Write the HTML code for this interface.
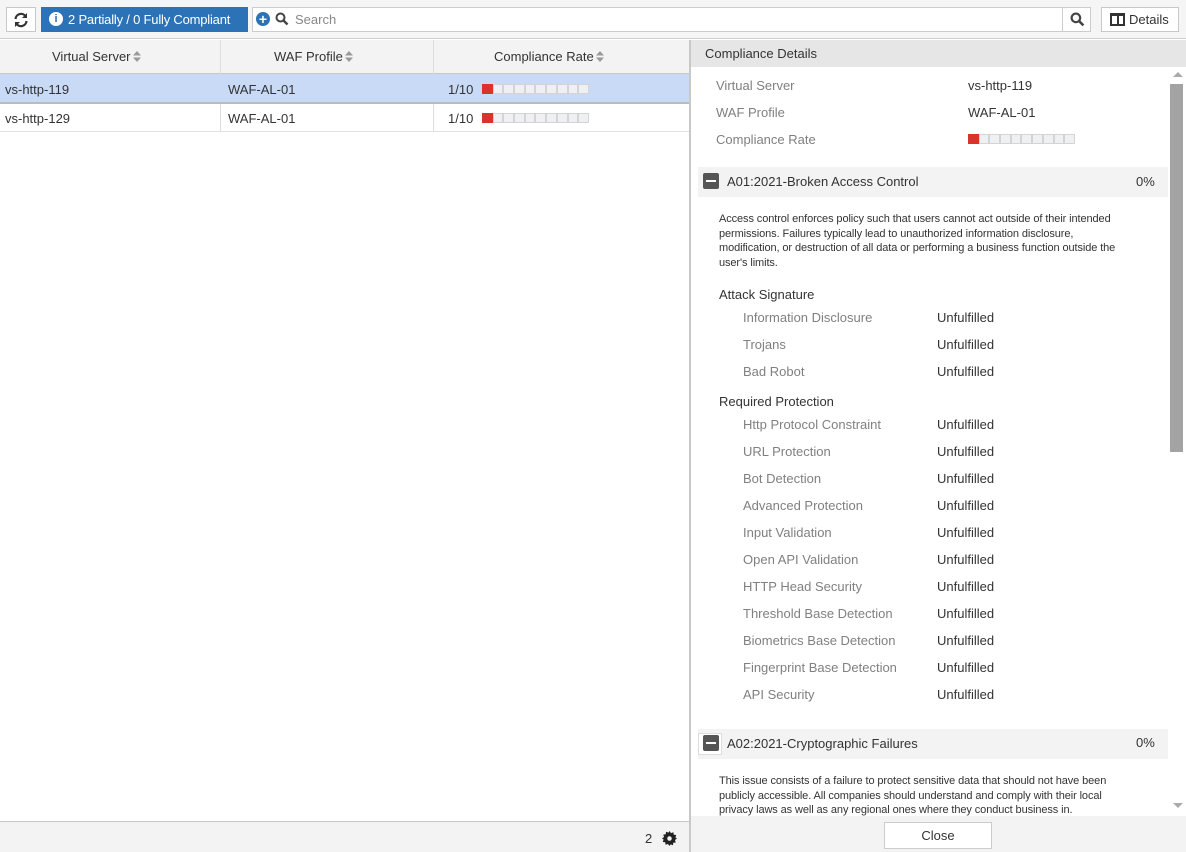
<!DOCTYPE html>
<html><head><meta charset="utf-8"><style>
*{box-sizing:border-box;margin:0;padding:0}
body{width:1186px;height:852px;overflow:hidden;background:#fff;font-family:"Liberation Sans",sans-serif;font-size:13px;color:#333;position:relative}
.a{position:absolute;white-space:nowrap}
.bar{position:absolute;display:flex;height:10px}
.bar i{display:block;width:10.7px;height:10px;border:1px solid #d4d4d4;background:#eef0f3;margin-right:0}
.bar i.r{background:#d9342b;border-color:#d9342b}
.lbl{color:#808080}
.desc{font-size:11px;line-height:14.5px;color:#333;letter-spacing:-0.1px}
.s{display:inline-block;vertical-align:-1px;margin-left:2px}
</style></head><body>
<!-- toolbar -->
<div class="a" style="left:0;top:0;width:1186px;height:39px;background:#f5f5f5;border-bottom:1px solid #cfcfcf"></div>
<div class="a" style="left:6px;top:7px;width:30px;height:25px;border:1px solid #c8c8c8;background:#fff"></div>
<svg class="a" style="left:13px;top:12px" width="16" height="16" viewBox="0 0 16 16"><path d="M2.5 7A5.5 5.5 0 0 1 12.5 4.2" stroke="#333" stroke-width="2.2" fill="none"/><path d="M14 1v5h-5z" fill="#333"/><path d="M13.5 9A5.5 5.5 0 0 1 3.5 11.8" stroke="#333" stroke-width="2.2" fill="none"/><path d="M2 15v-5h5z" fill="#333"/></svg>
<div class="a" style="left:41px;top:7px;width:207px;height:25px;background:#2b73b6"></div>
<div class="a" style="left:49px;top:12px;width:14px;height:14px;border-radius:50%;background:#fff;color:#2b73b6;font-weight:bold;font-size:11px;text-align:center;line-height:14px">i</div>
<div class="a" style="left:68px;top:12px;color:#fff;font-size:13px;letter-spacing:-0.2px">2 Partially / 0 Fully Compliant</div>
<div class="a" style="left:252px;top:7px;width:839px;height:25px;border:1px solid #ccc;background:#fff"></div>
<div class="a" style="left:256px;top:12px;width:14px;height:14px;border-radius:50%;background:#2b73b6;color:#fff;font-weight:bold;font-size:14px;text-align:center;line-height:14px">+</div>
<svg class="a" style="left:275px;top:12px" width="14" height="14" viewBox="0 0 14 14"><circle cx="5.5" cy="5.5" r="4" stroke="#444" stroke-width="2" fill="none"/><path d="M8.5 8.5L12.5 12.5" stroke="#444" stroke-width="2.4"/></svg>
<div class="a" style="left:295px;top:12px;color:#888">Search</div>
<div class="a" style="left:1062px;top:7px;width:1px;height:25px;background:#ccc"></div>
<svg class="a" style="left:1070px;top:12px" width="15" height="15" viewBox="0 0 14 14"><circle cx="5.5" cy="5.5" r="4" stroke="#444" stroke-width="2" fill="none"/><path d="M8.5 8.5L12.5 12.5" stroke="#444" stroke-width="2.4"/></svg>
<div class="a" style="left:1101px;top:7px;width:78px;height:25px;border:1px solid #c8c8c8;background:#fff"></div>
<div class="a" style="left:1110px;top:13px;width:15px;height:13px;border:2px solid #333;border-top-width:3px"></div>
<div class="a" style="left:1117px;top:14px;width:2px;height:11px;background:#333"></div>
<div class="a" style="left:1129px;top:12px;color:#333">Details</div>

<!-- left grid -->
<div class="a" style="left:0;top:40px;width:689px;height:34px;background:#f3f3f3;border-bottom:1px solid #c8c8c8"></div>
<div class="a" style="left:220px;top:40px;width:1px;height:92px;background:#ddd"></div>
<div class="a" style="left:433px;top:40px;width:1px;height:92px;background:#ddd"></div>
<div class="a" style="left:52px;top:49px">Virtual Server<svg class="s" width="8" height="11" viewBox="0 0 8 11"><path d="M0 4.5L4 0 8 4.5zM0 6.5L4 11 8 6.5z" fill="#999"/></svg></div>
<div class="a" style="left:274px;top:49px">WAF Profile<svg class="s" width="8" height="11" viewBox="0 0 8 11"><path d="M0 4.5L4 0 8 4.5zM0 6.5L4 11 8 6.5z" fill="#999"/></svg></div>
<div class="a" style="left:494px;top:49px">Compliance Rate<svg class="s" width="8" height="11" viewBox="0 0 8 11"><path d="M0 4.5L4 0 8 4.5zM0 6.5L4 11 8 6.5z" fill="#999"/></svg></div>
<div class="a" style="left:0;top:74px;width:689px;height:30px;background:#c8daf6;border-bottom:2px solid #bbb"></div>
<div class="a" style="left:0;top:131px;width:689px;height:1px;background:#e2e2e2"></div>
<div class="a" style="left:5px;top:82px">vs-http-119</div>
<div class="a" style="left:228px;top:82px">WAF-AL-01</div>
<div class="a" style="left:448px;top:82px">1/10</div>
<div class="bar" style="left:482px;top:84px"><i class="r"></i><i></i><i></i><i></i><i></i><i></i><i></i><i></i><i></i><i></i></div>
<div class="a" style="left:5px;top:111px">vs-http-129</div>
<div class="a" style="left:228px;top:111px">WAF-AL-01</div>
<div class="a" style="left:448px;top:111px">1/10</div>
<div class="bar" style="left:482px;top:113px"><i class="r"></i><i></i><i></i><i></i><i></i><i></i><i></i><i></i><i></i><i></i></div>
<div class="a" style="left:0;top:821px;width:690px;height:31px;background:#f3f3f3;border-top:1px solid #c8c8c8"></div>
<div class="a" style="left:645px;top:831px;color:#333">2</div>
<svg class="a" style="left:662px;top:831px" width="15" height="15" viewBox="0 0 16 16"><path d="M8 0l1.6 2.2 2.6-.9.3 2.7 2.7.3-.9 2.6L16 8l-2.2 1.6.9 2.6-2.7.3-.3 2.7-2.6-.9L8 16l-1.6-2.2-2.6.9-.3-2.7-2.7-.3.9-2.6L0 8l2.2-1.6-.9-2.6 2.7-.3.3-2.7 2.6.9z" fill="#222"/><circle cx="8" cy="8" r="2.4" fill="#f3f3f3"/></svg>

<!-- right panel -->
<div class="a" style="left:689px;top:40px;width:2px;height:812px;background:#c8c8c8"></div>
<div class="a" style="left:691px;top:40px;width:495px;height:27px;background:#e6e6e6"></div>
<div class="a" style="left:705px;top:46px">Compliance Details</div>
<div class="a" style="left:1173px;top:72px;width:0;height:0;border-left:5px solid transparent;border-right:5px solid transparent;border-bottom:5px solid #aaa"></div>
<div class="a" style="left:1170px;top:84px;width:13px;height:368px;background:#a3a3a3"></div>
<div class="a" style="left:1173px;top:803px;width:0;height:0;border-left:5px solid transparent;border-right:5px solid transparent;border-top:5px solid #aaa"></div>

<div class="a lbl" style="left:716px;top:78px">Virtual Server</div><div class="a" style="left:968px;top:78px">vs-http-119</div>
<div class="a lbl" style="left:716px;top:105px">WAF Profile</div><div class="a" style="left:968px;top:105px">WAF-AL-01</div>
<div class="a lbl" style="left:716px;top:132px">Compliance Rate</div>
<div class="bar" style="left:968px;top:134px"><i class="r"></i><i></i><i></i><i></i><i></i><i></i><i></i><i></i><i></i><i></i></div>

<div class="a" style="left:698px;top:167px;width:470px;height:30px;background:#f3f3f3"></div>
<div class="a" style="left:703px;top:173px;width:16px;height:16px;background:#555;border-radius:2px"></div>
<div class="a" style="left:706px;top:180px;width:10px;height:2px;background:#fff"></div>
<div class="a" style="left:727px;top:174px">A01:2021-Broken Access Control</div>
<div class="a" style="left:1136px;top:174px">0%</div>
<div class="a desc" style="left:719px;top:212px">Access control enforces policy such that users cannot act outside of their intended<br>permissions. Failures typically lead to unauthorized information disclosure,<br>modification, or destruction of all data or performing a business function outside the<br>user's limits.</div>
<div class="a" style="left:719px;top:287px">Attack Signature</div>
<div class="a lbl" style="left:743px;top:310px">Information Disclosure</div><div class="a" style="left:937px;top:310px">Unfulfilled</div>
<div class="a lbl" style="left:743px;top:337px">Trojans</div><div class="a" style="left:937px;top:337px">Unfulfilled</div>
<div class="a lbl" style="left:743px;top:364px">Bad Robot</div><div class="a" style="left:937px;top:364px">Unfulfilled</div>
<div class="a" style="left:719px;top:394px">Required Protection</div>
<div class="a lbl" style="left:743px;top:417px">Http Protocol Constraint</div><div class="a" style="left:937px;top:417px">Unfulfilled</div>
<div class="a lbl" style="left:743px;top:444px">URL Protection</div><div class="a" style="left:937px;top:444px">Unfulfilled</div>
<div class="a lbl" style="left:743px;top:471px">Bot Detection</div><div class="a" style="left:937px;top:471px">Unfulfilled</div>
<div class="a lbl" style="left:743px;top:498px">Advanced Protection</div><div class="a" style="left:937px;top:498px">Unfulfilled</div>
<div class="a lbl" style="left:743px;top:525px">Input Validation</div><div class="a" style="left:937px;top:525px">Unfulfilled</div>
<div class="a lbl" style="left:743px;top:552px">Open API Validation</div><div class="a" style="left:937px;top:552px">Unfulfilled</div>
<div class="a lbl" style="left:743px;top:579px">HTTP Head Security</div><div class="a" style="left:937px;top:579px">Unfulfilled</div>
<div class="a lbl" style="left:743px;top:606px">Threshold Base Detection</div><div class="a" style="left:937px;top:606px">Unfulfilled</div>
<div class="a lbl" style="left:743px;top:633px">Biometrics Base Detection</div><div class="a" style="left:937px;top:633px">Unfulfilled</div>
<div class="a lbl" style="left:743px;top:660px">Fingerprint Base Detection</div><div class="a" style="left:937px;top:660px">Unfulfilled</div>
<div class="a lbl" style="left:743px;top:687px">API Security</div><div class="a" style="left:937px;top:687px">Unfulfilled</div>

<div class="a" style="left:698px;top:729px;width:470px;height:30px;background:#f3f3f3"></div>
<div class="a" style="left:698px;top:733px;width:24px;height:22px;background:#fff;border:1px solid #ddd"></div>
<div class="a" style="left:703px;top:735px;width:16px;height:16px;background:#555;border-radius:2px"></div>
<div class="a" style="left:706px;top:742px;width:10px;height:2px;background:#fff"></div>
<div class="a" style="left:727px;top:736px">A02:2021-Cryptographic Failures</div>
<div class="a" style="left:1136px;top:735px">0%</div>
<div class="a desc" style="left:719px;top:774px">This issue consists of a failure to protect sensitive data that should not have been<br>publicly accessible. All companies should understand and comply with their local<br>privacy laws as well as any regional ones where they conduct business in.</div>
<div class="a" style="left:691px;top:816px;width:495px;height:36px;background:#f3f3f3"></div>
<div class="a" style="left:884px;top:822px;width:108px;height:27px;border:1px solid #ccc;background:#fff;text-align:center;line-height:25px">Close</div>
</body></html>
